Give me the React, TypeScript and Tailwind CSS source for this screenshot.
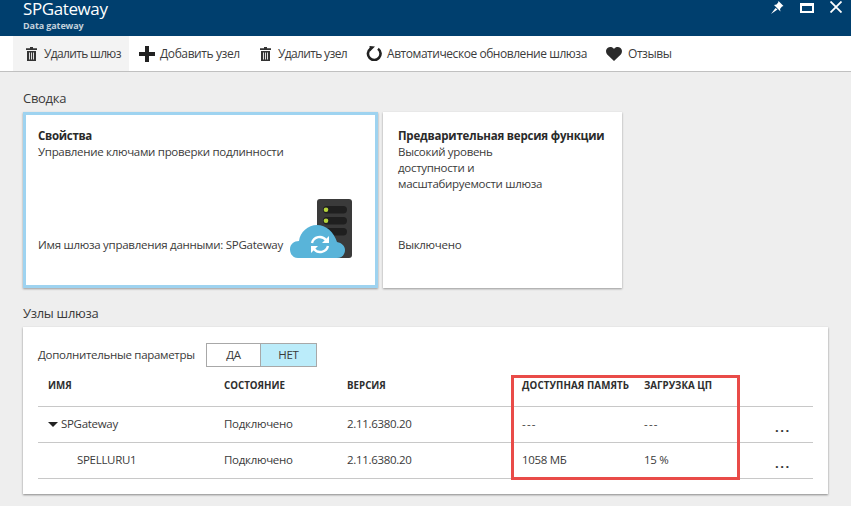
const font = "font-['Open_Sans','Noto_Sans',sans-serif]";

const rows = [
  { name: 'SPGateway', state: 'Подключено', version: '2.11.6380.20', mem: '---', cpu: '---', root: true },
  { name: 'SPELLURU1', state: 'Подключено', version: '2.11.6380.20', mem: '1058 МБ', cpu: '15 %', root: false },
];

const cols = 'grid grid-cols-[186px_123px_175px_122px_119px_50px]';

function TrashIcon({ className }: { className?: string }) {
  return (
    <svg width="11" height="14" viewBox="0 0 11 14" className={className}>
      <path d="M4 0h3v1.200h4V3H0V1.200h4z" fill="#333" />
      <path d="M1 4h9v10H1z" fill="#333" />
      <path d="M3 5.500h1v7H3zM5 5.500h1v7H5zM7 5.500h1v7H7z" fill="#ddd" />
    </svg>
  );
}

function PlusIcon({ className }: { className?: string }) {
  return (
    <svg width="16" height="16" viewBox="0 0 16 16" className={className}>
      <path d="M6 0h4v6h6v4h-6v6H6v-6H0V6h6z" fill="#222" />
    </svg>
  );
}

function RefreshIcon({ className }: { className?: string }) {
  return (
    <svg width="17" height="15" viewBox="0 0 17 15" className={className}>
      <path d="M12 2.700A6.300 6.300 0 1 1 4.500 2.700" fill="none" stroke="#222" strokeWidth="2.600" />
      <path d="M3.500 0L9 0.500L4 5.500z" fill="#222" />
    </svg>
  );
}

function HeartIcon({ className }: { className?: string }) {
  return (
    <svg width="16" height="14" viewBox="0 0 16 14" className={className}>
      <path d="M8 14L1.200 7.500C-0.500 5.500 -0.300 2.400 1.500 1C3.500 -0.500 6.500 -0.200 8 2C9.500 -0.200 12.500 -0.500 14.500 1C16.300 2.400 16.500 5.500 14.800 7.500Z" fill="#2b2b2b" />
    </svg>
  );
}

function PinIcon() {
  return (
    <svg width="13" height="13" viewBox="0 0 13 13">
      <path d="M7.500 0L12.500 5L11 5.500L9 8L9.500 10.500L3 4L5.500 3.500L7.200 1.500Z" fill="#fff" />
      <path d="M4.500 7L0 13L6.500 8.500Z" fill="#fff" />
    </svg>
  );
}

function Tool({ icon, label, active, className, labelClass }: { icon: React.ReactNode; label: string; active?: boolean; className?: string; labelClass?: string }) {
  return (
    <div className={`flex h-full shrink-0 items-center ${active ? 'bg-[#f3f3f3]' : ''} ${className ?? ''}`}>
      {icon}
      <span className={`whitespace-nowrap ${labelClass ?? 'tracking-[-0.45px]'}`}>{label}</span>
    </div>
  );
}

function ServerCloud() {
  return (
    <svg width="62" height="60" viewBox="0 0 62 60" className="shrink-0">
      <rect x="27" y="0" width="35" height="59" rx="3" fill="#3a3a3a" />
      <rect x="33" y="7" width="24" height="7.500" rx="3.700" fill="#1f1f1f" />
      <rect x="33" y="18" width="24" height="7.500" rx="3.700" fill="#1f1f1f" />
      <rect x="33" y="29" width="24" height="7.500" rx="3.700" fill="#1f1f1f" />
      <circle cx="36" cy="10.700" r="2.300" fill="#b5d33a" />
      <circle cx="36" cy="21.700" r="2.300" fill="#b5d33a" />
      <path
        d="M8 59C3 59 0 55 0 50.500C0 45 4 42 9 42C10 33 18 26 27 26C36 26 44 33 47 43C52 44 55 47 55 51C55 55.500 52 59 47 59Z"
        fill="#59b4d9"
      />
      <g transform="translate(2 2)">
        <path d="M20 42a8 8 0 0 1 14-3" fill="none" stroke="#fff" strokeWidth="2.400" />
        <path d="M37 35v7h-7z" fill="#fff" />
        <path d="M36 45a8 8 0 0 1-14 3" fill="none" stroke="#fff" strokeWidth="2.400" />
        <path d="M19 52v-7h7z" fill="#fff" />
      </g>
    </svg>
  );
}

export default function App() {
  return (
    <div className={`relative h-[506px] w-[851px] overflow-hidden bg-[#eeeeee] text-[#3a3a3a] ${font}`}>
      <div className="flex h-9 items-start justify-between overflow-hidden bg-[#003f6e] pl-[23px] pr-[9px] pt-[1px] text-white">
        <div>
          <div className="text-[17px] leading-[16px] tracking-[-0.4px]">SPGateway</div>
          <div className="mt-[3px] text-[9px] leading-[12px] font-bold tracking-[-0.1px] text-[#c3d1dc]">Data gateway</div>
        </div>
        <div className="flex items-start gap-[16px]">
          <PinIcon />
          <div className="mt-[2px] h-[10px] w-[14px] border-2 border-t-[3px] border-white" />
          <svg width="12" height="12" viewBox="0 0 12 12">
            <path d="M0.500 0.500L11.500 11.500M11.500 0.500L0.500 11.500" stroke="#fff" strokeWidth="1.800" />
          </svg>
        </div>
      </div>

      <div className="flex h-9 items-center border-b border-[#c0c0c0] bg-white pl-[13px] text-[12px] text-[#3c3c3c]">
        <Tool active className="w-[116px] pl-[13px]" labelClass="tracking-[-0.65px]" icon={<TrashIcon className="mr-[7px]" />} label="Удалить шлюз" />
        <Tool className="w-[121px] pl-[10px]" labelClass="tracking-[-0.4px]" icon={<PlusIcon className="mr-[5px]" />} label="Добавить узел" />
        <Tool className="w-[112px] pl-[10px]" labelClass="tracking-[-0.65px]" icon={<TrashIcon className="mr-[7px]" />} label="Удалить узел" />
        <Tool className="w-[244px] pl-[4px]" icon={<RefreshIcon className="mr-[4px]" />} label="Автоматическое обновление шлюза" />
        <Tool icon={<HeartIcon className="mr-[6px]" />} label="Отзывы" />
      </div>

      <div className="pl-[23px]">
        <div className="pt-[17px] text-[13px] leading-[18px] tracking-[-0.3px]">Сводка</div>
        <div className="mt-[5px] flex gap-[5px]">
          <div className="flex h-[176px] w-[355px] flex-col justify-between border-[3px] border-[#9ed3f0] bg-white pb-[26px] pl-[12px] pr-[23px] pt-[13px] shadow-[0_1px_2px_#999]">
            <div className="text-[11.5px] leading-[16px] tracking-[-0.3px]">
              <div className="font-bold text-[#2a2a2a]">Свойства</div>
              <div>Управление ключами проверки подлинности</div>
            </div>
            <div className="flex items-end justify-between">
              <div className="mb-[6px] text-[11.5px] leading-[16px] tracking-[-0.27px] whitespace-nowrap">Имя шлюза управления данными: SPGateway</div>
              <ServerCloud />
            </div>
          </div>
          <div className="flex h-[176px] w-[239px] flex-col justify-between bg-white pb-[35px] pl-[15px] pt-[16px] text-[11.5px] leading-[16px] tracking-[-0.3px] shadow-[0_1px_2px_#999]">
            <div>
              <div className="font-bold tracking-[-0.2px] text-[#2a2a2a]">Предварительная версия функции</div>
              <div>Высокий уровень</div>
              <div>доступности и</div>
              <div>масштабируемости шлюза</div>
            </div>
            <div>Выключено</div>
          </div>
        </div>

        <div className="pt-[16px] text-[13px] leading-[18px] tracking-[-0.3px]">Узлы шлюза</div>
        <div className="mt-[5px] h-[167px] w-[805px] bg-white pl-[15px] pr-[15px] pt-[16px] shadow-[0_1px_2px_#888]">
          <div className="flex items-center text-[11.5px] tracking-[-0.3px]">
            <span className="w-[168px]">Дополнительные параметры</span>
            <div className="flex h-[24px] text-[11.5px]">
              <div className="flex w-[55px] items-center justify-center border border-[#a8a8a8]">ДА</div>
              <div className="flex w-[56px] items-center justify-center border border-l-0 border-[#a8a8a8] bg-[#bbecfa]">НЕТ</div>
            </div>
          </div>

          <div className={`${cols} mt-[5px] h-[35px] items-center border-b border-[#c8c8c8] pb-[5px] text-[9.75px] font-bold text-[#2e2e2e]`}>
            <span className="pl-[10px]">ИМЯ</span>
            <span>СОСТОЯНИЕ</span>
            <span>ВЕРСИЯ</span>
            <span className="whitespace-nowrap tracking-[0.1px]">ДОСТУПНАЯ ПАМЯТЬ</span>
            <span>ЗАГРУЗКА ЦП</span>
            <span />
          </div>
          {rows.map((r) => (
            <div key={r.name} className={`${cols} h-[36px] items-center border-b border-[#c8c8c8] pb-[1px] text-[11.5px] tracking-[-0.3px]`}>
              <span className={r.root ? 'flex items-center pl-[10px]' : 'pl-[39px]'}>
                {r.root && <span className="mr-[3px] mt-[1px] border-x-[5px] border-t-[5px] border-x-transparent border-t-[#222]" />}
                {r.name}
              </span>
              <span>{r.state}</span>
              <span>{r.version}</span>
              <span className={r.root ? 'tracking-[1.2px]' : ''}>{r.mem}</span>
              <span className={r.root ? 'tracking-[1.2px]' : ''}>{r.cpu}</span>
              <span className="mt-[6px] pl-[12px] text-[13px] font-bold leading-none tracking-[1.5px] text-[#333]">...</span>
            </div>
          ))}
        </div>
      </div>

      <div className="absolute left-[511px] top-[375px] h-[105px] w-[229px] border-[3px] border-[#e94b48]" />
    </div>
  );
}
